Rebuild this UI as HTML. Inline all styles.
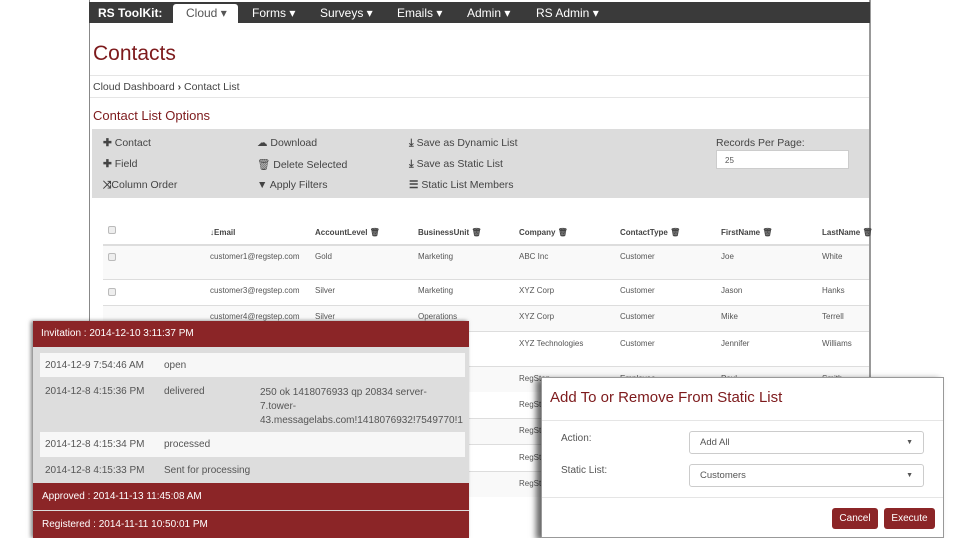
<!DOCTYPE html>
<html><head><meta charset="utf-8"><style>
*{margin:0;padding:0;box-sizing:border-box}
body{width:960px;height:538px;overflow:hidden;background:#fff;font-family:"Liberation Sans",sans-serif;position:relative;color:#333}
.a{position:absolute;white-space:nowrap}
.nav{left:89px;top:2px;width:781px;height:21px;background:#3a3a3a}
.nav span{position:absolute;top:4px;font-size:12px;color:#fff}
.t{font-size:8px;color:#555}
.h{font-size:8px;font-weight:bold;color:#444}
.op{font-size:10.5px;color:#444}
.cb{width:8px;height:8px;border:1px solid #bbb;border-radius:2px;background:#eee}
.red{background:#8b2527;color:#fff;font-size:10px}
.pr{font-size:10px;color:#555}
.btn{background:#8b2527;color:#fff;font-size:10px;border-radius:3px;text-align:center;line-height:21px;height:21px}
.sel{border:1px solid #ccc;border-radius:3px;background:#fff;font-size:9.5px;color:#555;padding:0 10px;line-height:21px;height:23px}
</style></head><body>
<div class="a" style="left:89px;top:0;width:1px;height:538px;background:#888"></div>
<div class="a" style="left:869px;top:0;width:2px;height:380px;background:#999"></div>
<div class="a nav">
<span style="left:9px;font-weight:bold">RS ToolKit:</span>
<div class="a" style="left:84px;top:2px;width:65px;height:19px;background:#fff;border-radius:3px 3px 0 0"></div>
<span style="left:97px;color:#555">Cloud ▾</span>
<span style="left:163px">Forms ▾</span>
<span style="left:231px">Surveys ▾</span>
<span style="left:308px">Emails ▾</span>
<span style="left:378px">Admin ▾</span>
<span style="left:447px">RS Admin ▾</span>
</div>
<div class="a" style="left:93px;top:42px;font-size:21px;color:#7d1a1c">Contacts</div>
<div class="a" style="left:90px;top:75px;width:779px;height:1px;background:#e5e5e5"></div>
<div class="a" style="left:93px;top:81px;font-size:10.5px;color:#444">Cloud Dashboard <b>›</b> Contact List</div>
<div class="a" style="left:90px;top:97px;width:779px;height:1px;background:#e5e5e5"></div>
<div class="a" style="left:93px;top:108px;font-size:13px;color:#7d1a1c">Contact List Options</div>
<div class="a" style="left:92px;top:129px;width:777px;height:69px;background:#dcdcdc"></div>
<div class="a op" style="left:103px;top:137px"><b>✚</b> Contact</div>
<div class="a op" style="left:103px;top:158px"><b>✚</b> Field</div>
<div class="a op" style="left:103px;top:179px"><b>⤨</b>Column Order</div>
<div class="a op" style="left:257px;top:137px">☁ Download</div>
<div class="a op" style="left:257px;top:158px">🗑 Delete Selected</div>
<div class="a op" style="left:257px;top:179px"><b>▼</b> Apply Filters</div>
<div class="a op" style="left:409px;top:137px"><b>⤓</b> Save as Dynamic List</div>
<div class="a op" style="left:409px;top:158px"><b>⤓</b> Save as Static List</div>
<div class="a op" style="left:409px;top:179px"><b>☰</b> Static List Members</div>
<div class="a op" style="left:716px;top:137px">Records Per Page:</div>
<div class="a" style="left:716px;top:150px;width:133px;height:19px;background:#fff;border:1px solid #ccc;font-size:8px;color:#555;padding:5px 8px">25</div>

<div class="a" style="left:103px;top:244px;width:766px;height:35px;background:#f9f9f9;border-top:2px solid #ddd"></div>
<div class="a" style="left:103px;top:305px;width:766px;height:26px;background:#f9f9f9;border-top:1px solid #ddd"></div>
<div class="a" style="left:103px;top:279px;width:766px;height:1px;background:#ddd"></div>
<div class="a" style="left:103px;top:331px;width:766px;height:1px;background:#ddd"></div>
<div class="a" style="left:103px;top:366px;width:766px;height:26px;background:#f9f9f9;border-top:1px solid #ddd"></div>
<div class="a" style="left:103px;top:418px;width:766px;height:27px;background:#f9f9f9;border-top:1px solid #ddd;border-bottom:1px solid #ddd"></div>
<div class="a" style="left:103px;top:471px;width:766px;height:26px;background:#f9f9f9;border-top:1px solid #ddd"></div>

<div class="a cb" style="left:108px;top:226px"></div>
<div class="a h" style="left:210px;top:228px">↓Email</div>
<div class="a h" style="left:315px;top:228px">AccountLevel 🗑</div>
<div class="a h" style="left:418px;top:228px">BusinessUnit 🗑</div>
<div class="a h" style="left:519px;top:228px">Company 🗑</div>
<div class="a h" style="left:620px;top:228px">ContactType 🗑</div>
<div class="a h" style="left:721px;top:228px">FirstName 🗑</div>
<div class="a h" style="left:822px;top:228px">LastName 🗑</div>

<div class="a cb" style="left:108px;top:253px"></div>
<div class="a t" style="left:210px;top:252px">customer1@regstep.com</div><div class="a t" style="left:315px;top:252px">Gold</div><div class="a t" style="left:418px;top:252px">Marketing</div><div class="a t" style="left:519px;top:252px">ABC Inc</div><div class="a t" style="left:620px;top:252px">Customer</div><div class="a t" style="left:721px;top:252px">Joe</div><div class="a t" style="left:822px;top:252px">White</div>
<div class="a cb" style="left:108px;top:288px"></div>
<div class="a t" style="left:210px;top:286px">customer3@regstep.com</div><div class="a t" style="left:315px;top:286px">Silver</div><div class="a t" style="left:418px;top:286px">Marketing</div><div class="a t" style="left:519px;top:286px">XYZ Corp</div><div class="a t" style="left:620px;top:286px">Customer</div><div class="a t" style="left:721px;top:286px">Jason</div><div class="a t" style="left:822px;top:286px">Hanks</div>
<div class="a t" style="left:210px;top:312px">customer4@regstep.com</div><div class="a t" style="left:315px;top:312px">Silver</div><div class="a t" style="left:418px;top:312px">Operations</div><div class="a t" style="left:519px;top:312px">XYZ Corp</div><div class="a t" style="left:620px;top:312px">Customer</div><div class="a t" style="left:721px;top:312px">Mike</div><div class="a t" style="left:822px;top:312px">Terrell</div>
<div class="a t" style="left:519px;top:339px">XYZ Technologies</div><div class="a t" style="left:620px;top:339px">Customer</div><div class="a t" style="left:721px;top:339px">Jennifer</div><div class="a t" style="left:822px;top:339px">Williams</div>
<div class="a t" style="left:519px;top:374px">RegStep</div><div class="a t" style="left:620px;top:374px">Employee</div><div class="a t" style="left:721px;top:374px">Paul</div><div class="a t" style="left:822px;top:374px">Smith</div>
<div class="a t" style="left:519px;top:400px">RegSt</div><div class="a t" style="left:519px;top:426px">RegSt</div><div class="a t" style="left:519px;top:453px">RegSt</div><div class="a t" style="left:519px;top:479px">RegSt</div>

<!-- left popup -->
<div class="a" style="left:33px;top:321px;width:436px;height:217px;background:#ddd;box-shadow:-2px 0 4px rgba(0,0,0,.5)"></div>
<div class="a red" style="left:33px;top:321px;width:436px;height:26px;padding:7px 8px">Invitation : 2014-12-10 3:11:37 PM</div>
<div class="a" style="left:40px;top:353px;width:425px;height:24px;background:#f7f7f7"></div>
<div class="a" style="left:40px;top:432px;width:425px;height:25px;background:#f7f7f7"></div>
<div class="a pr" style="left:45px;top:360px">2014-12-9 7:54:46 AM</div><div class="a pr" style="left:164px;top:360px">open</div>
<div class="a pr" style="left:45px;top:386px">2014-12-8 4:15:36 PM</div><div class="a pr" style="left:164px;top:386px">delivered</div>
<div class="a pr" style="left:260px;top:386px;line-height:14px">250 ok 1418076933 qp 20834 server-<br>7.tower-<br>43.messagelabs.com!1418076932!7549770!1</div>
<div class="a pr" style="left:45px;top:439px">2014-12-8 4:15:34 PM</div><div class="a pr" style="left:164px;top:439px">processed</div>
<div class="a pr" style="left:45px;top:465px">2014-12-8 4:15:33 PM</div><div class="a pr" style="left:164px;top:465px">Sent for processing</div>
<div class="a red" style="left:33px;top:483px;width:436px;height:27px;padding:8px 9px">Approved : 2014-11-13 11:45:08 AM</div>
<div class="a red" style="left:33px;top:511px;width:436px;height:27px;padding:8px 9px">Registered : 2014-11-11 10:50:01 PM</div>

<!-- modal -->
<div class="a" style="left:541px;top:377px;width:403px;height:161px;background:#fff;border:1px solid #999;box-shadow:-5px 2px 6px rgba(0,0,0,.6)"></div>
<div class="a" style="left:550px;top:389px;font-size:15px;color:#7d1a1c">Add To or Remove From Static List</div>
<div class="a" style="left:542px;top:420px;width:401px;height:1px;background:#e5e5e5"></div>
<div class="a pr" style="left:561px;top:433px">Action:</div>
<div class="a pr" style="left:561px;top:465px">Static List:</div>
<div class="a sel" style="left:689px;top:431px;width:235px">Add All<span style="float:right;font-size:7px">▼</span></div>
<div class="a sel" style="left:689px;top:464px;width:235px">Customers<span style="float:right;font-size:7px">▼</span></div>
<div class="a" style="left:542px;top:497px;width:401px;height:1px;background:#e5e5e5"></div>
<div class="a btn" style="left:832px;top:508px;width:46px">Cancel</div>
<div class="a btn" style="left:884px;top:508px;width:51px">Execute</div>
</body></html>
